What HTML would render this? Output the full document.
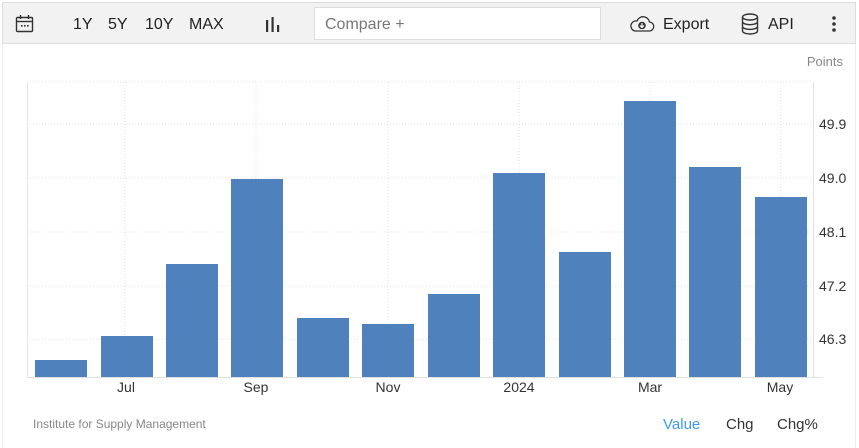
<!DOCTYPE html>
<html><head><style>
body{margin:0;width:859px;height:448px;background:#fff;font-family:"Liberation Sans",sans-serif;position:relative;overflow:hidden}
.tb{position:absolute;left:2px;top:2px;width:854px;height:42px;background:#f2f2f2;border:1px solid #ddd;box-sizing:border-box}
.t{position:absolute;font-size:16px;color:#222;top:16px}
.cmp{position:absolute;left:314px;top:7px;width:287px;height:33px;background:#fff;border:1px solid #ddd;box-sizing:border-box;font-size:16px;color:#777;padding:8px 10px}
.frame{position:absolute;left:2px;top:44px;width:854px;height:404px;border-left:1px solid #eee;border-right:1px solid #eee;box-sizing:border-box}
</style></head><body>
<div class="tb"></div>
<div class="frame"></div>
<svg style="position:absolute;left:15px;top:14px" width="20" height="20" viewBox="0 0 20 20" fill="none" stroke="#333" stroke-width="1.4"><rect x="1.5" y="3.5" width="16" height="14" rx="1"/><line x1="1.5" y1="7.5" x2="17.5" y2="7.5"/><line x1="5.5" y1="1" x2="5.5" y2="5"/><line x1="13.5" y1="1" x2="13.5" y2="5"/><g fill="#333" stroke="none"><rect x="6" y="11" width="1.6" height="1.6"/><rect x="9" y="11" width="1.6" height="1.6"/><rect x="12" y="11" width="1.6" height="1.6"/></g></svg>
<div class="t" style="left:73px">1Y</div>
<div class="t" style="left:108px">5Y</div>
<div class="t" style="left:145px">10Y</div>
<div class="t" style="left:189px">MAX</div>
<svg style="position:absolute;left:265px;top:16px" width="16" height="16"><rect x="1" y="4" width="2.2" height="12" fill="#333"/><rect x="6.5" y="1" width="2.2" height="15" fill="#333"/><rect x="12" y="9" width="2.2" height="7" fill="#333"/></svg>
<div class="cmp">Compare +</div>
<svg style="position:absolute;left:629px;top:15px" width="26" height="18" viewBox="0 0 26 18" fill="none" stroke="#333" stroke-width="1.3"><path d="M6 16H20a4.5 4.5 0 0 0 .5-9A6.5 6.5 0 0 0 8 6 5 5 0 0 0 6 16Z"/><circle cx="13" cy="10.5" r="3.8" fill="#333" stroke="none"/><path d="M13 8v4.5M11 10.5l2 2 2-2" stroke="#fff" stroke-width="1.2"/></svg>
<div class="t" style="left:663px">Export</div>
<svg style="position:absolute;left:741px;top:13px" width="18" height="22" viewBox="0 0 18 22" fill="none" stroke="#333" stroke-width="1.4"><ellipse cx="9" cy="4" rx="7.5" ry="3"/><path d="M1.5 4v14c0 1.7 3.4 3 7.5 3s7.5-1.3 7.5-3V4M1.5 8.7c0 1.7 3.4 3 7.5 3s7.5-1.3 7.5-3M1.5 13.4c0 1.7 3.4 3 7.5 3s7.5-1.3 7.5-3"/></svg>
<div class="t" style="left:768px">API</div>
<svg style="position:absolute;left:831px;top:16px" width="6" height="16"><circle cx="3" cy="2" r="1.8" fill="#333"/><circle cx="3" cy="8" r="1.8" fill="#333"/><circle cx="3" cy="14" r="1.8" fill="#333"/></svg>

<svg style="position:absolute;left:0;top:0" width="859" height="448" font-family="Liberation Sans, sans-serif">
<text x="843" y="66" font-size="13" fill="#888" text-anchor="end">Points</text>
<g stroke="#e2e2e2" stroke-dasharray="1,2" stroke-width="1">
<line x1="27" y1="82" x2="813" y2="82"/>
<line x1="27" y1="124" x2="813" y2="124"/><line x1="27" y1="178" x2="813" y2="178"/><line x1="27" y1="232" x2="813" y2="232"/><line x1="27" y1="286" x2="813" y2="286"/><line x1="27" y1="339" x2="813" y2="339"/>
<line x1="125" y1="82" x2="125" y2="377"/><line x1="256" y1="82" x2="256" y2="377"/><line x1="388" y1="82" x2="388" y2="377"/><line x1="519" y1="82" x2="519" y2="377"/><line x1="650" y1="82" x2="650" y2="377"/><line x1="781" y1="82" x2="781" y2="377"/>
</g>
<line x1="27.5" y1="82" x2="27.5" y2="377" stroke="#e6e6e6"/>
<line x1="813.5" y1="82" x2="813.5" y2="377" stroke="#e0e0e0"/>
<line x1="27" y1="377.5" x2="823" y2="377.5" stroke="#e0e0e0"/>
<g fill="#4f81bd">
<rect x="35" y="360" width="52" height="17"/><rect x="101" y="336" width="52" height="41"/><rect x="166" y="264" width="52" height="113"/><rect x="231" y="179" width="52" height="198"/><rect x="297" y="318" width="52" height="59"/><rect x="362" y="324" width="52" height="53"/><rect x="428" y="294" width="52" height="83"/><rect x="493" y="173" width="52" height="204"/><rect x="559" y="252" width="52" height="125"/><rect x="624" y="101" width="52" height="276"/><rect x="689" y="167" width="52" height="210"/><rect x="755" y="197" width="52" height="180"/>
</g>
<g font-size="14" fill="#333">
<text x="819" y="129">49.9</text><text x="819" y="183">49.0</text><text x="819" y="237">48.1</text><text x="819" y="291">47.2</text><text x="819" y="344">46.3</text>
</g>
<g font-size="14" fill="#333" text-anchor="middle">
<text x="126" y="392">Jul</text><text x="256" y="392">Sep</text><text x="388" y="392">Nov</text><text x="519" y="392">2024</text><text x="650" y="392">Mar</text><text x="780" y="392">May</text>
</g>
<text x="33" y="428" font-size="12" fill="#888">Institute for Supply Management</text>
<text x="663" y="429" font-size="15" fill="#3d9bf0">Value</text>
<text x="726" y="429" font-size="15" fill="#333">Chg</text>
<text x="777" y="429" font-size="15" fill="#333">Chg%</text>
</svg>
</body></html>
